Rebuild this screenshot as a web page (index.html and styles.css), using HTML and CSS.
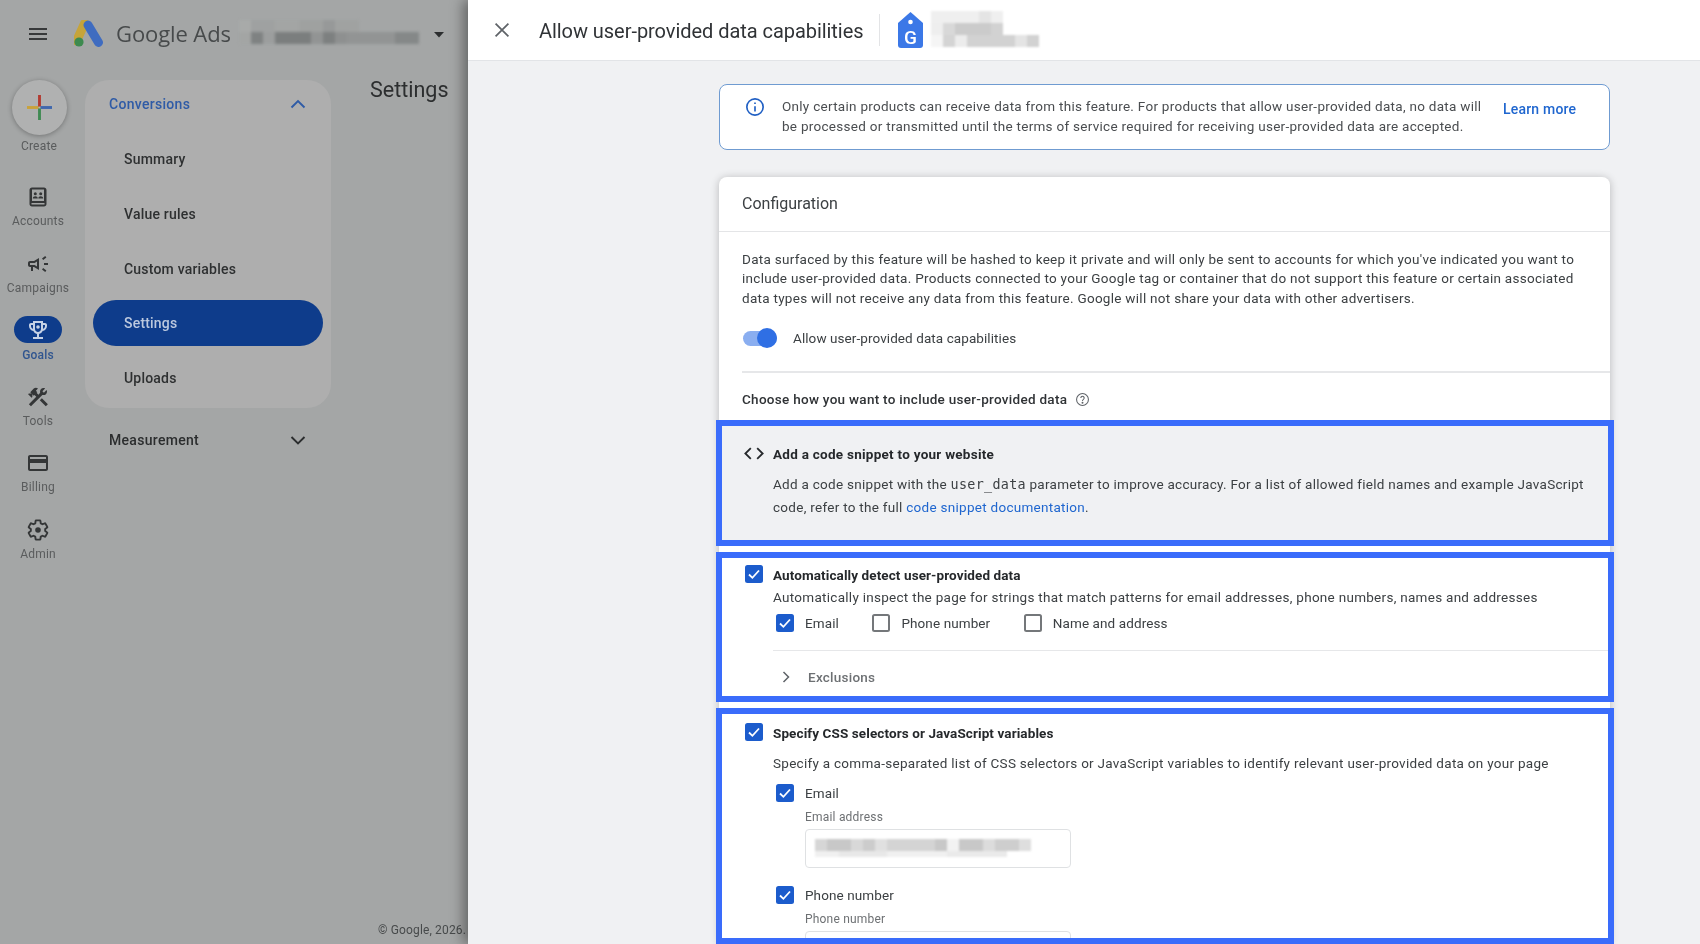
FILE: index.html
```html
<!DOCTYPE html>
<html lang="en">
<head>
<meta charset="utf-8">
<title>Allow user-provided data capabilities</title>
<link rel="stylesheet" href="styles.css">
</head>
<body>
<div class="app">
  <aside class="backdrop">
    <div class="soft backdrop-inner">
      <header class="topbar">
        <svg class="hamburger" viewBox="0 0 24 24"><path d="M3 18h18v-2H3v2zm0-5h18v-2H3v2zm0-7v2h18V6H3z"/></svg>
        <svg class="ads-logo" viewBox="0 0 30 27">
          <path d="M10.5 3.5 L2.6 21" class="logo-y"/>
          <path d="M14 5 L24.5 22.5" class="logo-b"/>
          <circle cx="5" cy="22" r="4.6" class="logo-g"/>
        </svg>
        <span class="brand">Google Ads</span>
        <svg class="account-blur" viewBox="0 0 192 30">
          <rect x="0" y="0" width="12" height="12" fill="#a8aaa9"/><rect x="12" y="0" width="24" height="12" fill="#9fa1a1"/><rect x="36" y="0" width="24" height="12" fill="#a3a5a4"/><rect x="60" y="0" width="24" height="12" fill="#9fa1a0"/><rect x="84" y="0" width="12" height="12" fill="#979999"/><rect x="96" y="0" width="24" height="12" fill="#a0a2a1"/>
          <rect x="0" y="12" width="12" height="12" fill="#a3a5a4"/><rect x="12" y="12" width="12" height="12" fill="#7f8282"/><rect x="24" y="12" width="12" height="12" fill="#9c9e9e"/><rect x="36" y="12" width="36" height="12" fill="#7b7e7e"/><rect x="72" y="12" width="12" height="12" fill="#929494"/><rect x="84" y="12" width="12" height="12" fill="#7d8080"/><rect x="96" y="12" width="12" height="12" fill="#8e9090"/><rect x="108" y="12" width="48" height="12" fill="#929494"/><rect x="156" y="12" width="24" height="12" fill="#858888"/>
        </svg>
        <svg class="caret" viewBox="0 0 10 6"><path d="M0 0h10L5 5.5z"/></svg>
      </header>
      <div class="shell">
        <nav class="rail">
          <a class="rail-create">
            <span class="fab">
              <svg viewBox="0 0 26 26" class="fab-plus">
                <rect x="0" y="11.5" width="12" height="3" fill="#c9a23a"/>
                <rect x="11.5" y="0" width="3" height="12" fill="#b23a30"/>
                <rect x="14" y="11.5" width="12" height="3" fill="#3f67ad"/>
                <rect x="11.5" y="14" width="3" height="12" fill="#3f8a52"/>
              </svg>
            </span>
            <span class="rail-label">Create</span>
          </a>
          <a class="rail-item">
            <svg viewBox="0 0 24 24" class="rail-icon"><path d="M6 2.5h12c1.4 0 2.5 1.1 2.5 2.5v14c0 1.4-1.1 2.5-2.5 2.5H6c-1.4 0-2.5-1.1-2.5-2.5V5c0-1.4 1.1-2.5 2.5-2.5zm0 2V16h12V4.500zM5.500 18v1.500h13V18z" fill-rule="evenodd"/><circle cx="9.300" cy="8.700" r="1.500"/><circle cx="14.700" cy="8.700" r="1.500"/><path d="M6.800 13.500c0-1.500 1.200-2.300 2.500-2.300s2.500.8 2.500 2.300zM12.300 13.500c0-1.500 1.100-2.300 2.400-2.300s2.500.8 2.500 2.300z"/></svg>
            <span class="rail-label">Accounts</span>
          </a>
          <a class="rail-item">
            <svg viewBox="0 0 24 24" class="rail-icon"><path d="M18 11v2h4v-2h-4zm-2 6.610c.96.71 2.210 1.650 3.200 2.390.4-.53.8-1.070 1.200-1.600-.99-.74-2.240-1.680-3.200-2.400-.4.54-.8 1.080-1.200 1.610zM20.400 5.600c-.4-.53-.8-1.070-1.200-1.600-.99.74-2.240 1.680-3.200 2.400.4.53.8 1.070 1.200 1.600.96-.72 2.210-1.650 3.200-2.400zM4 9c-1.100 0-2 .9-2 2v2c0 1.100.9 2 2 2h1v4h2v-4h1l5 3V6L8 9H4zm5.030 1.710L11 9.530v4.940l-1.970-1.180-.48-.29H4v-2h4.550l.48-.29z"/></svg>
            <span class="rail-label">Campaigns</span>
          </a>
          <a class="rail-item rail-item-active">
            <span class="goal-pill">
              <svg viewBox="0 0 24 24" class="goal-icon"><path d="M19 5h-2V3H7v2H5c-1.100 0-2 .9-2 2v1c0 2.550 1.920 4.630 4.390 4.940.63 1.500 1.980 2.630 3.610 2.960V19H7v2h10v-2h-4v-3.100c1.630-.33 2.980-1.460 3.610-2.960C19.080 12.630 21 10.550 21 8V7c0-1.100-.9-2-2-2zM5 8V7h2v3.820C5.840 10.400 5 9.300 5 8zm7 6c-1.650 0-3-1.350-3-3V5h6v6c0 1.650-1.350 3-3 3zm7-6c0 1.300-.84 2.400-2 2.820V7h2v1z"/><circle cx="12" cy="9" r="1.800"/></svg>
            </span>
            <span class="rail-label">Goals</span>
          </a>
          <a class="rail-item">
            <svg viewBox="0 0 24 24" class="rail-icon"><path d="M13.780 15.300L19.780 21.300L21.890 19.140L15.890 13.140L13.780 15.300ZM17.500 10.100C17.110 10.100 16.690 10.050 16.360 9.910L4.970 21.250L2.860 19.140L10.270 11.740L8.500 9.960L7.780 10.660L6.330 9.250V12.110L5.630 12.810L2.110 9.250L2.810 8.550H5.620L4.220 7.140L7.780 3.580C8.950 2.410 10.830 2.410 12 3.580L9.890 5.740L11.300 7.140L10.590 7.850L12.380 9.630L14.200 7.750C14.060 7.420 14 7 14 6.630C14 4.660 15.560 3.110 17.500 3.110C18.090 3.110 18.610 3.250 19.080 3.530L16.410 6.200L17.910 7.700L20.580 5.030C20.860 5.500 21 6 21 6.630C21 8.550 19.450 10.100 17.500 10.100Z"/></svg>
            <span class="rail-label">Tools</span>
          </a>
          <a class="rail-item">
            <svg viewBox="0 0 24 24" class="rail-icon"><path d="M20 4H4c-1.110 0-1.990.89-1.990 2L2 18c0 1.110.89 2 2 2h16c1.110 0 2-.89 2-2V6c0-1.110-.89-2-2-2zm0 14H4v-6h16v6zm0-10H4V6h16v2z"/></svg>
            <span class="rail-label">Billing</span>
          </a>
          <a class="rail-item">
            <svg viewBox="0 0 24 24" class="rail-icon"><path class="gear-line" d="M19.140 12.940c.04-.3.06-.61.06-.94 0-.32-.02-.64-.07-.94l2.030-1.580c.18-.14.23-.41.12-.61l-1.920-3.320c-.12-.22-.37-.29-.59-.22l-2.390.96c-.5-.38-1.030-.7-1.620-.94l-.36-2.540c-.04-.24-.24-.41-.48-.41h-3.840c-.24 0-.43.17-.47.41l-.36 2.540c-.59.24-1.130.57-1.620.94l-2.390-.96c-.22-.08-.47 0-.59.22L2.740 8.870c-.12.21-.08.47.12.61l2.030 1.580c-.05.3-.09.63-.09.94s.02.64.07.94l-2.030 1.580c-.18.14-.23.41-.12.61l1.920 3.320c.12.22.37.29.59.22l2.390-.96c.5.38 1.030.7 1.620.94l.36 2.540c.05.24.24.41.48.41h3.840c.24 0 .44-.17.47-.41l.36-2.540c.59-.24 1.130-.56 1.620-.94l2.390.96c.22.08.47 0 .59-.22l1.920-3.320c.12-.22.07-.47-.12-.61l-2.010-1.580z"/><circle cx="12" cy="12" r="2.800"/></svg>
            <span class="rail-label">Admin</span>
          </a>
        </nav>
        <div class="side">
          <div class="nav-panel">
            <div class="nav-head">
              <span>Conversions</span>
              <svg viewBox="0 0 24 24" class="chev"><path d="M5.500 15.500L12 9l6.500 6.500"/></svg>
            </div>
            <div class="nav-list">
              <a class="nav-item">Summary</a>
              <a class="nav-item">Value rules</a>
              <a class="nav-item">Custom variables</a>
              <a class="nav-item nav-item-active">Settings</a>
              <a class="nav-item">Uploads</a>
            </div>
          </div>
          <div class="nav-row">
            <span>Measurement</span>
            <svg viewBox="0 0 24 24" class="chev"><path d="M5.500 9L12 15.500 18.500 9"/></svg>
          </div>
        </div>
        <main class="page">
          <h1 class="page-title">Settings</h1>
          <p class="copyright">© Google, 2026.</p>
        </main>
      </div>
    </div>
  </aside>

  <section class="drawer">
    <header class="drawer-head soft">
      <svg viewBox="0 0 24 24" class="close"><path d="M5 5l14 14M19 5L5 19"/></svg>
      <h2 class="drawer-title">Allow user-provided data capabilities</h2>
      <span class="head-divider"></span>
      <svg viewBox="0 0 25 36" class="tag">
        <path d="M12.500 0L25 11V33a3 3 0 0 1-3 3H3a3 3 0 0 1-3-3V11z" fill="#3b78e7"/>
        <circle cx="12.500" cy="10" r="2.300" fill="#fff"/>
        <text x="12.500" y="32" text-anchor="middle" class="tag-g">G</text>
      </svg>
      <svg viewBox="0 0 108 38" class="tag-blur">
        <rect x="0" y="0" width="48" height="12" fill="#efefef"/><rect x="48" y="0" width="12" height="12" fill="#e4e4e4"/><rect x="60" y="0" width="12" height="12" fill="#efefef"/>
        <rect x="0" y="12" width="12" height="12" fill="#eeeeee"/><rect x="12" y="12" width="12" height="12" fill="#d8d8d8"/><rect x="24" y="12" width="36" height="12" fill="#cbcbcb"/><rect x="60" y="12" width="12" height="12" fill="#d2d2d2"/>
        <rect x="0" y="24" width="12" height="12" fill="#f5f5f5"/><rect x="12" y="24" width="12" height="12" fill="#d4d4d4"/><rect x="24" y="24" width="12" height="12" fill="#ececec"/><rect x="36" y="24" width="48" height="12" fill="#d2d2d2"/><rect x="84" y="24" width="12" height="12" fill="#e4e4e4"/><rect x="96" y="24" width="12" height="12" fill="#d2d2d2"/>
      </svg>
    </header>
    <div class="drawer-body">
      <div class="column">
        <div class="notice soft">
          <svg viewBox="0 0 24 24" class="notice-icon"><circle cx="12" cy="12" r="9.800"/><path d="M12 11v6.500M12 6.500v2"/></svg>
          <p class="notice-text">Only certain products can receive data from this feature. For products that allow user-provided data, no data will<br>be processed or transmitted until the terms of service required for receiving user-provided data are accepted.</p>
          <a class="notice-link">Learn more</a>
        </div>

        <div class="card">
          <div class="card-head soft">Configuration</div>
          <div class="card-intro soft">
            <p class="body-text">Data surfaced by this feature will be hashed to keep it private and will only be sent to accounts for which you've indicated you want to<br>include user-provided data. Products connected to your Google tag or container that do not support this feature or certain associated<br>data types will not receive any data from this feature. Google will not share your data with other advertisers.</p>
            <div class="toggle-row">
              <span class="toggle"><span class="toggle-thumb"></span></span>
              <span class="toggle-label">Allow user-provided data capabilities</span>
            </div>
            <hr class="rule rule-intro">
            <div class="choose">
              <strong class="choose-title">Choose how you want to include user-provided data</strong>
              <svg viewBox="0 0 24 24" class="help"><circle cx="12" cy="12" r="9.500"/><path d="M9.300 9.500a2.700 2.700 0 1 1 4.200 2.300c-1 .7-1.500 1.200-1.500 2.400"/><circle cx="12" cy="17.200" r=".7"/></svg>
            </div>
          </div>

          <section class="option option-code">
            <div class="soft">
              <div class="option-title-row">
                <svg viewBox="0 0 22 16" class="code-icon"><path d="M7.500 2L1.500 8l6 6M14.500 2l6 6-6 6"/></svg>
                <strong class="option-title">Add a code snippet to your website</strong>
              </div>
              <p class="option-text">Add a code snippet with the <code class="mono">user_data</code> parameter to improve accuracy. For a list of allowed field names and example JavaScript<br>code, refer to the full <a class="link">code snippet documentation</a>.</p>
            </div>
          </section>

          <section class="option option-auto">
            <div class="soft">
              <div class="option-title-row">
                <span class="check"><svg viewBox="0 0 18 18"><path d="M4 9.500l3.400 3.300L14 5.500"/></svg></span>
                <strong class="option-title">Automatically detect user-provided data</strong>
              </div>
              <p class="option-desc">Automatically inspect the page for strings that match patterns for email addresses, phone numbers, names and addresses</p>
              <div class="check-row">
                <label class="check-item"><span class="check"><svg viewBox="0 0 18 18"><path d="M4 9.500l3.400 3.300L14 5.500"/></svg></span>Email</label>
                <label class="check-item"><span class="check check-off"></span>Phone number</label>
                <label class="check-item"><span class="check check-off"></span>Name and address</label>
              </div>
              <hr class="rule rule-option">
              <div class="exclusions">
                <svg viewBox="0 0 10 14" class="excl-chev"><path d="M2.500 2l5 5-5 5"/></svg>
                <span>Exclusions</span>
              </div>
            </div>
          </section>

          <section class="option option-css">
            <div class="soft">
              <div class="option-title-row">
                <span class="check"><svg viewBox="0 0 18 18"><path d="M4 9.500l3.400 3.300L14 5.500"/></svg></span>
                <strong class="option-title">Specify CSS selectors or JavaScript variables</strong>
              </div>
              <p class="option-desc option-desc-gap">Specify a comma-separated list of CSS selectors or JavaScript variables to identify relevant user-provided data on your page</p>
              <div class="field">
                <label class="check-item"><span class="check"><svg viewBox="0 0 18 18"><path d="M4 9.500l3.400 3.300L14 5.500"/></svg></span>Email</label>
                <div class="field-label">Email address</div>
                <div class="input">
                  <svg viewBox="0 0 222 24" class="input-blur">
                    <rect x="0" y="0" width="12" height="12" fill="#d6d6d6"/><rect x="12" y="0" width="24" height="12" fill="#c8c8c8"/><rect x="36" y="0" width="12" height="12" fill="#d8d8d8"/><rect x="48" y="0" width="12" height="12" fill="#cccccc"/><rect x="60" y="0" width="12" height="12" fill="#e0e0e0"/><rect x="72" y="0" width="48" height="12" fill="#d4d4d4"/><rect x="120" y="0" width="12" height="12" fill="#c8c8c8"/><rect x="132" y="0" width="12" height="12" fill="#f2f2f2"/><rect x="144" y="0" width="24" height="12" fill="#c8c8c8"/><rect x="168" y="0" width="12" height="12" fill="#dcdcdc"/><rect x="180" y="0" width="24" height="12" fill="#cecece"/><rect x="204" y="0" width="12" height="12" fill="#dedede"/>
                    <rect x="0" y="12" width="24" height="6" fill="#f0f0f0"/><rect x="24" y="12" width="48" height="6" fill="#e8e8e8"/><rect x="72" y="12" width="60" height="6" fill="#f0f0f0"/><rect x="132" y="12" width="60" height="6" fill="#eaeaea"/>
                  </svg>
                </div>
              </div>
              <div class="field field-next">
                <label class="check-item"><span class="check"><svg viewBox="0 0 18 18"><path d="M4 9.500l3.400 3.300L14 5.500"/></svg></span>Phone number</label>
                <div class="field-label">Phone number</div>
                <div class="input"></div>
              </div>
            </div>
          </section>
        </div>
      </div>
    </div>
  </section>
</div>
</body>
</html>
```

FILE: styles.css
```css
* { box-sizing: border-box; }
html, body { margin: 0; height: 944px; overflow: hidden; }
body { font-family: Roboto, "Liberation Sans", sans-serif; color: #3c4043; background: #f0f1f3; }
h1, h2, p { margin: 0; font-weight: 400; }
svg { display: block; }
.soft { filter: blur(0.45px); }

.app { display: grid; grid-template-columns: 468px 1fr; height: 944px; overflow: hidden; }

/* left, dimmed product chrome */
.backdrop { background: #a4a6a6; height: 944px; overflow: hidden; }
.backdrop-inner { height: 944px; display: flex; flex-direction: column; }
.topbar { height: 80px; display: flex; align-items: flex-start; padding: 20px 0 0 26px; flex: none; }
.hamburger { width: 24px; height: 24px; fill: #37393a; margin-top: 2px; }
.ads-logo { width: 30px; height: 27px; margin-left: 24px; }
.logo-y { stroke: #c6a43a; stroke-width: 9; stroke-linecap: round; fill: none; }
.logo-b { stroke: #3f6cc0; stroke-width: 9; stroke-linecap: round; fill: none; }
.logo-g { fill: #3d8a4f; }
.brand { font-family: "Open Sans", Roboto, sans-serif; font-size: 22px; line-height: 28px; color: #474a4b; margin: -1px 0 0 12px; white-space: nowrap; letter-spacing: -0.1px; }
.account-blur { width: 192px; height: 30px; margin-left: 8px; filter: blur(1.4px); }
.caret { width: 10px; height: 6px; fill: #2c2e2f; margin: 12px 0 0 3px; }

.shell { flex: 1; display: flex; min-height: 0; }
.rail { width: 85px; flex: none; display: flex; flex-direction: column; }
.rail-create { display: flex; flex-direction: column; align-items: center; width: 78px; height: 93px; flex: none; }
.fab { width: 55px; height: 55px; border-radius: 50%; background: #b0b1b1; box-shadow: 0 1px 5px rgba(0,0,0,.3); display: flex; align-items: center; justify-content: center; flex: none; }
.fab-plus { width: 25px; height: 25px; }
.rail-item { width: 76px; height: 66.5px; display: flex; flex-direction: column; align-items: center; flex: none; padding-top: 12px; }
.rail-icon { width: 24px; height: 24px; fill: #343637; flex: none; }
.rail-label { font-size: 12px; line-height: 16px; color: #5a5c5d; margin-top: 4px; letter-spacing: .2px; white-space: nowrap; }
.rail-create .rail-label { margin-top: 3px; }
.rail-item-active { padding-top: 10px; }
.rail-item-active .rail-label { color: #30558f; font-weight: 500; margin-top: 4px; }
.goal-pill { width: 48px; height: 27px; border-radius: 14px; background: #0e3c8b; display: flex; align-items: center; justify-content: center; flex: none; }
.goal-icon { width: 24px; height: 24px; fill: #c6d2e6; }
.gear-line { fill: none; stroke: #343637; stroke-width: 1.9; }

.side { width: 246px; flex: none; }
.nav-panel { height: 328px; background: #aeaeae; border-radius: 24px; padding: 0 8px; }
.nav-head, .nav-row { height: 48px; display: flex; align-items: center; justify-content: space-between; font-size: 14px; font-weight: 500; letter-spacing: .3px; }
.nav-head { color: #2f5ba6; padding: 0 13px 0 16px; }
.nav-row { color: #2b2d2e; padding: 0 21px 0 24px; margin-top: 8px; }
.chev { width: 24px; height: 24px; fill: none; stroke-width: 1.9; flex: none; }
.nav-head .chev { stroke: #2f5ba6; }
.nav-row .chev { stroke: #2b2d2e; }
.nav-list { display: flex; flex-direction: column; gap: 8.75px; margin-top: 8px; }
.nav-item { height: 46px; border-radius: 23px; padding-left: 31px; display: flex; align-items: center; font-size: 14px; font-weight: 500; color: #2e3031; letter-spacing: .2px; }
.nav-item-active { background: #0e3c8b; color: #bcc9df; }

.page { flex: 1; position: relative; padding: 0 0 0 39px; min-width: 0; }
.page-title { font-family: Roboto, sans-serif; font-size: 21.5px; line-height: 30px; color: #2c2e2f; margin-top: -5px; white-space: nowrap; }
.copyright { position: absolute; right: 2px; bottom: 6px; font-size: 12px; line-height: 16px; letter-spacing: .15px; color: #474a4b; white-space: nowrap; }

/* right drawer */
.drawer { background: #f0f1f3; height: 944px; box-shadow: -5px 0 12px rgba(0,0,0,.38); position: relative; display: flex; flex-direction: column; min-width: 0; }
.drawer-head { height: 61px; flex: none; background: #fff; border-bottom: 1.5px solid #e2e4e7; display: flex; align-items: center; padding-left: 23px; }
.close { width: 22px; height: 22px; fill: none; stroke: #5f6368; stroke-width: 1.9; }
.drawer-title { font-size: 20px; line-height: 28px; letter-spacing: -.05px; color: #303336; margin: 2px 0 0 26px; white-space: nowrap; }
.head-divider { width: 1px; height: 32px; background: #e3e4e6; margin-left: 16px; }
.tag { width: 25px; height: 36px; margin-left: 18px; }
.tag-g { font-family: Roboto, sans-serif; font-size: 19px; font-weight: 500; fill: #fff; }
.tag-blur { width: 108px; height: 38px; margin-left: 8px; filter: blur(1.2px); }

.drawer-body { flex: 1; padding: 23px 0 0 251px; min-height: 0; overflow: hidden; }
.column { width: 891px; }

.notice { height: 66px; background: #fff; border: 1.5px solid #6f9bd1; border-radius: 8px; display: flex; padding: 12px 0 0 25px; }
.notice-icon { width: 20px; height: 20px; fill: none; stroke: #2160c4; stroke-width: 2; flex: none; }
.notice-text { font-size: 13.5px; line-height: 19.5px; letter-spacing: .28px; color: #4a4d50; margin-left: 17px; white-space: nowrap; width: 721px; }
.notice-link { font-size: 14px; font-weight: 500; color: #1f66cf; line-height: 20px; margin: 2px 0 0 0; white-space: nowrap; letter-spacing: .2px; }

.card { background: #fff; border-radius: 8px 8px 0 0; margin-top: 27px; box-shadow: 0 1px 8px rgba(0,0,0,.24); }
.card-head { height: 55px; border-bottom: 1.5px solid #e4e5e7; padding: 17px 0 0 23px; font-size: 16px; line-height: 20px; color: #3c4043; }
.card-intro { padding: 17.5px 0 0 23px; }
.body-text { font-size: 13.5px; line-height: 19.5px; letter-spacing: .28px; color: #3c4043; white-space: nowrap; }
.toggle-row { height: 24px; margin-top: 18px; display: flex; align-items: center; }
.toggle { width: 34px; height: 15px; border-radius: 8px; background: #8aaef0; position: relative; margin-left: 1px; flex: none; }
.toggle-thumb { position: absolute; right: 0; top: -2.5px; width: 20px; height: 20px; border-radius: 50%; background: #2f6fe4; }
.toggle-label { font-size: 13.5px; letter-spacing: .08px; margin-left: 16px; color: #3c4043; }
.rule { border: 0; margin: 0; height: 1.5px; background: #e6e7e9; }
.rule-intro { margin-top: 21px; }
.choose { height: 20px; margin-top: 16px; display: flex; align-items: center; }
.choose-title { font-size: 13.5px; font-weight: 500; letter-spacing: .285px; color: #2f3235; }
.help { width: 15px; height: 15px; margin: 2px 0 0 8px; fill: none; stroke: #5f6368; stroke-width: 1.7; }

.option { border: 6px solid #3a6cfb; width: 898px; margin-left: -3px; padding-left: 23px; overflow: hidden; background: #fff; }
.option-code { background: #f0f1f3; height: 126px; margin-top: 11px; padding-top: 18px; }
.option-auto { height: 150px; margin-top: 6px; padding-top: 7px; }
.option-css { height: 236px; margin-top: 6px; padding-top: 9px; }
.option-title-row { height: 20px; display: flex; align-items: flex-start; gap: 10px; }
.option-code .option-title-row { align-items: center; gap: 9px; }
.option-title { font-size: 13.5px; line-height: 20px; font-weight: 700; letter-spacing: .1px; color: #25282b; white-space: nowrap; }
.option-code .option-title { letter-spacing: .26px; }
.code-icon { width: 20px; height: 15px; margin-left: -1px; fill: none; stroke: #26292c; stroke-width: 2; }
.option-text { font-size: 13.5px; line-height: 23px; letter-spacing: .28px; margin: 9px 0 0 28px; white-space: nowrap; color: #3c4043; }
.mono { font-family: "DejaVu Sans Mono", "Liberation Mono", monospace; font-size: 13.4px; letter-spacing: .3px; }
.link { color: #1f66cf; }
.option-desc { font-size: 13.5px; line-height: 20px; letter-spacing: .28px; margin: 2px 0 0 28px; white-space: nowrap; color: #3c4043; }
.option-desc-gap { margin-top: 10px; }

.check { width: 18px; height: 18px; border-radius: 2.5px; background: #1c5ccc; flex: none; display: block; }
.check svg { width: 18px; height: 18px; fill: none; stroke: #fff; stroke-width: 1.8; }
.check-off { background: #fff; border: 2px solid #74777a; }
.check-row { height: 18px; margin: 7px 0 0 31px; display: flex; gap: 33.5px; }
.check-item { display: flex; align-items: center; gap: 11px; height: 18px; font-size: 13.5px; letter-spacing: .1px; color: #3c4043; white-space: nowrap; }
.rule-option { margin: 18px 0 0 28px; }
.exclusions { height: 20px; margin: 16px 0 0 36px; display: flex; align-items: center; gap: 17px; font-size: 13.5px; font-weight: 500; letter-spacing: .25px; color: #6d7073; }
.excl-chev { width: 10px; height: 14px; fill: none; stroke: #5f6368; stroke-width: 1.5; flex: none; }

.field { margin: 11px 0 0 31px; }
.field-next { margin-top: 18px; }
.field-label { font-size: 12px; line-height: 16px; letter-spacing: .2px; color: #6d7073; margin: 7.5px 0 0 29px; }
.input { width: 266px; height: 39px; margin: 3.5px 0 0 29px; border: 1.5px solid #dfe1e3; border-radius: 4px; background: #fff; padding: 9px 0 0 9px; }
.input-blur { width: 222px; height: 24px; filter: blur(1px); }
```
